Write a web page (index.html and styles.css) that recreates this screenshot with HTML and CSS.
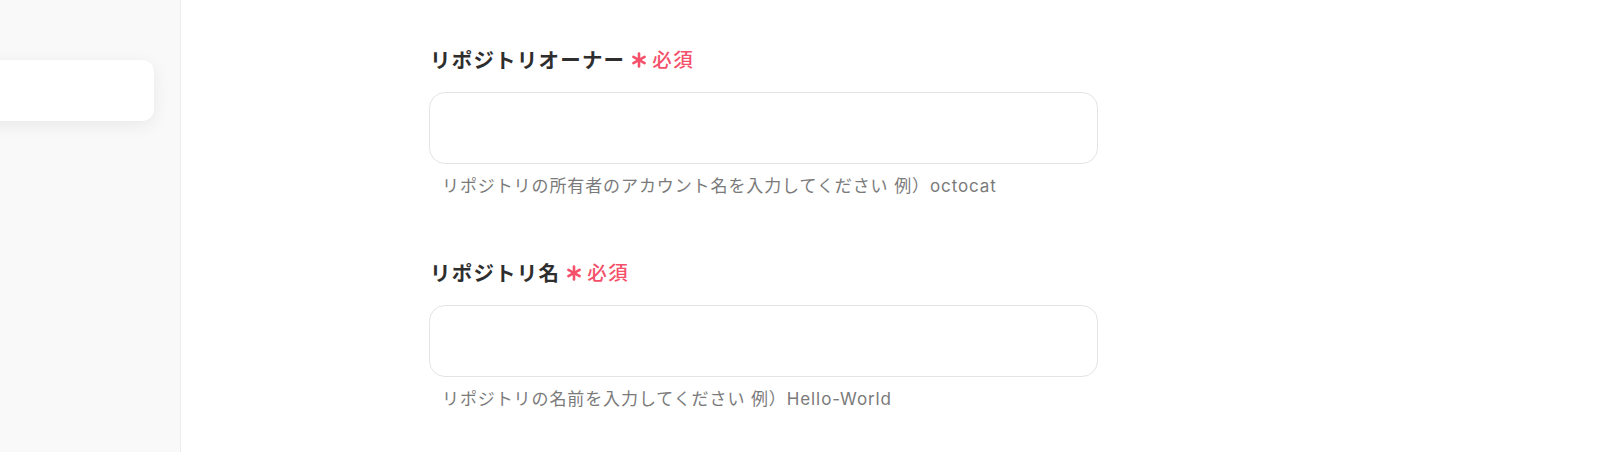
FILE: index.html
```html
<!DOCTYPE html>
<html lang="ja">
<head>
<meta charset="utf-8">
<link rel="stylesheet" href="styles.css">
</head>
<body>
<div class="layout">
  <aside class="sidebar">
    <div class="side-card"></div>
  </aside>
  <main class="main">
    <form class="form">
      <div class="field">
        <label class="label">リポジトリオーナー<span class="req"><svg class="ast" viewBox="0 0 16 16" aria-hidden="true"><g stroke="currentColor" stroke-width="2.6" stroke-linecap="round"><line x1="8" y1="1.5" x2="8" y2="14.5"/><line x1="2.4" y1="4.8" x2="13.6" y2="11.2"/><line x1="2.4" y1="11.2" x2="13.6" y2="4.8"/></g></svg>必須</span></label>
        <div class="input"></div>
        <p class="help">リポジトリの所有者のアカウント名を入力してください 例）octocat</p>
      </div>
      <div class="field">
        <label class="label">リポジトリ名<span class="req"><svg class="ast" viewBox="0 0 16 16" aria-hidden="true"><g stroke="currentColor" stroke-width="2.6" stroke-linecap="round"><line x1="8" y1="1.5" x2="8" y2="14.5"/><line x1="2.4" y1="4.8" x2="13.6" y2="11.2"/><line x1="2.4" y1="11.2" x2="13.6" y2="4.8"/></g></svg>必須</span></label>
        <div class="input"></div>
        <p class="help">リポジトリの名前を入力してください 例）Hello-World</p>
      </div>
    </form>
  </main>
</div>
</body>
</html>
```
FILE: styles.css
```css
* { box-sizing: border-box; }
html, body { margin: 0; padding: 0; background: #fff; }
body {
  font-family: "Noto Sans CJK JP", "Noto Sans", sans-serif;
  width: 1600px;
  height: 452px;
  overflow: hidden;
}
.layout { display: flex; height: 452px; }
.sidebar {
  width: 181px;
  flex: none;
  background: #f9f9f9;
  border-right: 1px solid #ececec;
  padding-top: 60px;
  padding-right: 26px;
}
.side-card {
  height: 61px;
  margin-left: -20px;
  background: #fff;
  border-radius: 12px;
  box-shadow: 0 4px 18px rgba(0, 0, 0, 0.07);
}
.main { flex: 1; padding-left: 248px; padding-top: 44px; }
.form { width: 669px; display: flex; flex-direction: column; gap: 59px; }
.field { display: flex; flex-direction: column; }
.label {
  font-size: 20.5px;
  font-weight: 700;
  color: #2e2e2e;
  line-height: 30px;
  padding-left: 1px;
  letter-spacing: 1.2px;
  margin-bottom: 18px;
  display: flex;
  align-items: center;
}
.req {
  color: #f5506a;
  font-size: 19.5px;
  font-weight: 500;
  letter-spacing: 1.5px;
  margin-left: 6px;
  display: inline-flex;
  align-items: center;
}
.ast { width: 16px; height: 16px; margin-right: 5px; margin-top: 2px; }
.input {
  height: 72px;
  border: 1.5px solid #e2e4e8;
  border-radius: 16px;
  background: #fff;
}
.help {
  margin: 10px 0 0 13px;
  font-family: Inter, "Noto Sans CJK JP", sans-serif;
  font-size: 17px;
  line-height: 24px;
  color: #7a7a7a;
  letter-spacing: 0.9px;
}
```
